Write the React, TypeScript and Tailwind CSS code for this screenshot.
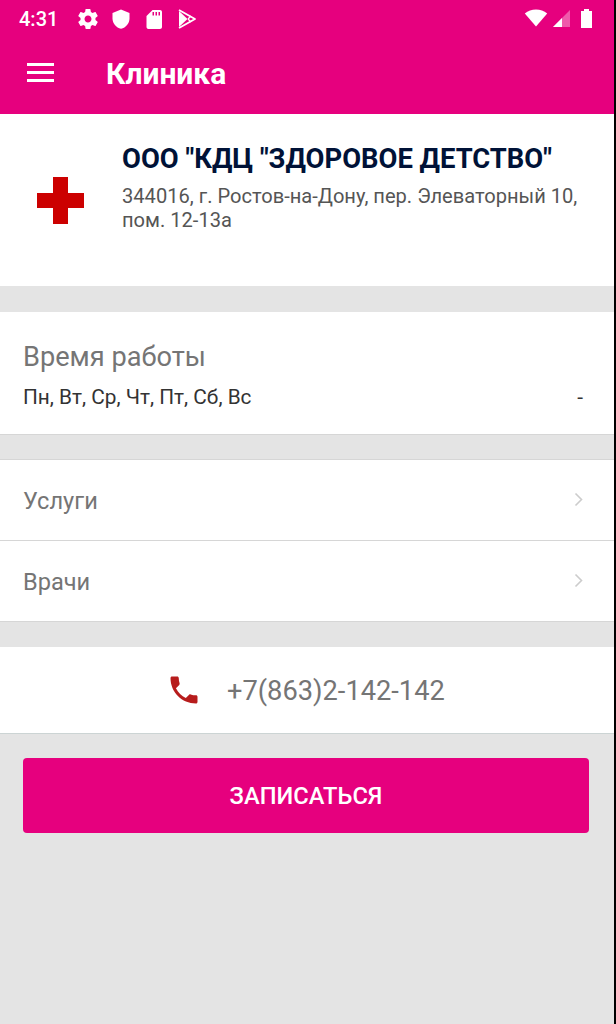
const font = "font-['Roboto',sans-serif]";

function Chevron() {
  return (
    <svg width="12" height="16" viewBox="0 0 12 16" fill="none" className="shrink-0">
      <path d="M2.5 1.5 L8.5 7.5 L2.5 13.5" stroke="#cccccc" strokeWidth="1.6" />
    </svg>
  );
}

function Row({ label }: { label: string }) {
  return (
    <div className="flex h-[81px] items-center justify-between border-b border-[#d6d6d6] pl-[23px] pr-[29px]">
      <span className="relative top-[1px] text-[23.6px] leading-[26px] text-[#757575]">{label}</span>
      <Chevron />
    </div>
  );
}

export default function App() {
  return (
    <div className={`${font} flex h-[1024px] w-[616px] bg-black`}>
      <div className="flex h-full w-[614px] flex-col bg-[#e4e4e4]">
        <header className="h-[114px] shrink-0 bg-[#e6007e] text-white">
          <div className="flex h-[38px] items-center pl-[19px] pr-[18px]">
            <span className="w-[41px] text-[20px] font-medium leading-none">4:31</span>
            <div className="ml-[16px] flex items-center gap-[9px]">
              <svg width="24" height="24" viewBox="0 0 24 24" fill="#fff">
                <path d="M19.43 12.98c.04-.32.07-.64.07-.98s-.03-.66-.07-.98l2.11-1.65c.19-.15.24-.42.12-.64l-2-3.46c-.12-.22-.39-.3-.61-.22l-2.49 1c-.52-.4-1.08-.73-1.69-.98l-.38-2.65A.488.488 0 0 0 14 2h-4c-.25 0-.46.18-.49.42l-.38 2.65c-.61.25-1.17.59-1.69.98l-2.49-1c-.23-.09-.49 0-.61.22l-2 3.46c-.13.22-.07.49.12.64l2.11 1.65c-.04.32-.07.65-.07.98s.03.66.07.98l-2.11 1.65c-.19.15-.24.42-.12.64l2 3.46c.12.22.39.3.61.22l2.49-1c.52.4 1.08.73 1.69.98l.38 2.65c.03.24.24.42.49.42h4c.25 0 .46-.18.49-.42l.38-2.65c.61-.25 1.17-.59 1.69-.98l2.49 1c.23.09.49 0 .61-.22l2-3.46c.12-.22.07-.49-.12-.64l-2.11-1.65zM12 15.5c-1.93 0-3.5-1.57-3.5-3.5s1.57-3.5 3.5-3.5 3.5 1.57 3.5 3.5-1.57 3.5-3.5 3.5z" />
              </svg>
              <svg width="24" height="24" viewBox="0 0 24 24" fill="#fff">
                <path d="M12 2.5 3.5 6v5.5c0 4.8 3.6 9.2 8.5 10.3 4.9-1.1 8.5-5.5 8.5-10.3V6L12 2.5z" />
              </svg>
              <svg width="24" height="24" viewBox="0 0 24 24" fill="#fff">
                <path d="M18 3h-7.5L4.5 9v11c0 1.1.9 2 2 2H18c1.1 0 2-.9 2-2V5c0-1.100-.9-2-2-2zM12 8.500h-1.500V5H12v3.500zm3 0h-1.500V5H15v3.500zm3 0h-1.500V5H18v3.500z" />
              </svg>
              <svg width="24" height="24" viewBox="0 0 24 24" fill="none" stroke="#fff" strokeWidth="1.8">
                <path d="M4 4v16l8.500-8L4 4Z" fill="#fff" stroke="none" />
                <path d="M4 3 20 12 4 21" strokeLinejoin="round" />
                <path d="M13 12 16 15M13 12l3-3" strokeWidth="1.400" />
              </svg>
            </div>
            <div className="ml-auto flex items-center gap-[4px]">
              <svg width="24" height="20" viewBox="0 0 24 20" fill="#fff">
                <path d="M12 17.500.8 4.500C4 1.800 7.800.5 12 .5s8 1.300 11.200 4L12 17.500Z" />
              </svg>
              <svg width="20" height="20" viewBox="0 0 20 20">
                <path d="M1 18 18 1v17H1Z" fill="#fff" fillOpacity="0.35" />
                <path d="M1 18 10 9v9H1Z" fill="#fff" />
              </svg>
              <svg width="18" height="20" viewBox="0 0 18 20" fill="#fff" className="ml-[2px]">
                <path d="M6 0h5v2h3v17H3V2h3V0Z" />
              </svg>
            </div>
          </div>
          <div className="flex h-[72px] items-center pl-[27px]">
            <div className="mb-[3px] flex w-[27px] flex-col gap-[5px]">
              <div className="h-[3px] bg-white" />
              <div className="h-[3px] bg-white" />
              <div className="h-[3px] bg-white" />
            </div>
            <h1 className="ml-[52px] text-[30px] font-bold leading-none">Клиника</h1>
          </div>
        </header>

        <section className="flex h-[172px] shrink-0 bg-white pl-[37px]">
          <svg width="47" height="47" viewBox="0 0 47 47" className="mt-[63px] shrink-0">
            <path d="M16 0h15v16h16v15H31v16H16V31H0V16h16V0Z" fill="#cc0000" />
          </svg>
          <div className="ml-[38px] pt-[29px]">
            <h2 className="whitespace-nowrap text-[27.4px] font-bold leading-[32px] text-[#001237]">
              ООО "КДЦ "ЗДОРОВОЕ ДЕТСТВО"
            </h2>
            <p className="mt-[9px] w-[470px] text-[20.1px] leading-[24px] text-[#555]">
              344016, г. Ростов-на-Дону, пер. Элеваторный 10, пом. 12-13а
            </p>
          </div>
        </section>

        <section className="mt-[26px] h-[123px] shrink-0 border-b border-[#d6d6d6] bg-white pl-[23px] pr-[31px] pt-[28px]">
          <div className="text-[27.2px] leading-[34px] text-[#757575]">Время работы</div>
          <div className="mt-[11px] flex items-center justify-between text-[20.800px] leading-[24px] text-[#333]">
            <span>Пн, Вт, Ср, Чт, Пт, Сб, Вс</span>
            <span>-</span>
          </div>
        </section>

        <section className="mt-[24px] shrink-0 border-t border-[#d6d6d6] bg-white">
          <Row label="Услуги" />
          <Row label="Врачи" />
        </section>

        <section className="mt-[25px] flex h-[87px] shrink-0 items-center border-b border-[#ccd4d4] bg-white pl-[166px]">
          <svg width="36" height="36" viewBox="0 0 24 24" fill="#b71c1c" className="shrink-0">
            <path d="M6.620 10.790c1.440 2.830 3.760 5.140 6.590 6.590l2.200-2.200c.27-.27.67-.36 1.020-.24 1.120.37 2.330.57 3.570.57.55 0 1 .45 1 1V20c0 .55-.45 1-1 1-9.390 0-17-7.610-17-17 0-.55.45-1 1-1h3.500c.55 0 1 .45 1 1 0 1.250.2 2.450.57 3.570.11.35.03.74-.25 1.020l-2.200 2.200z" />
          </svg>
          <span className="relative top-[2px] ml-[25px] text-[27.250px] leading-none text-[#757575]">+7(863)2-142-142</span>
        </section>

        <div className="px-[23px] pt-[24px]">
          <button className="flex h-[75px] w-[566px] items-center justify-center rounded-[4px] bg-[#e6007e] pt-[2px] text-[23.700px] font-medium text-white">
            ЗАПИСАТЬСЯ
          </button>
        </div>
      </div>
    </div>
  );
}
